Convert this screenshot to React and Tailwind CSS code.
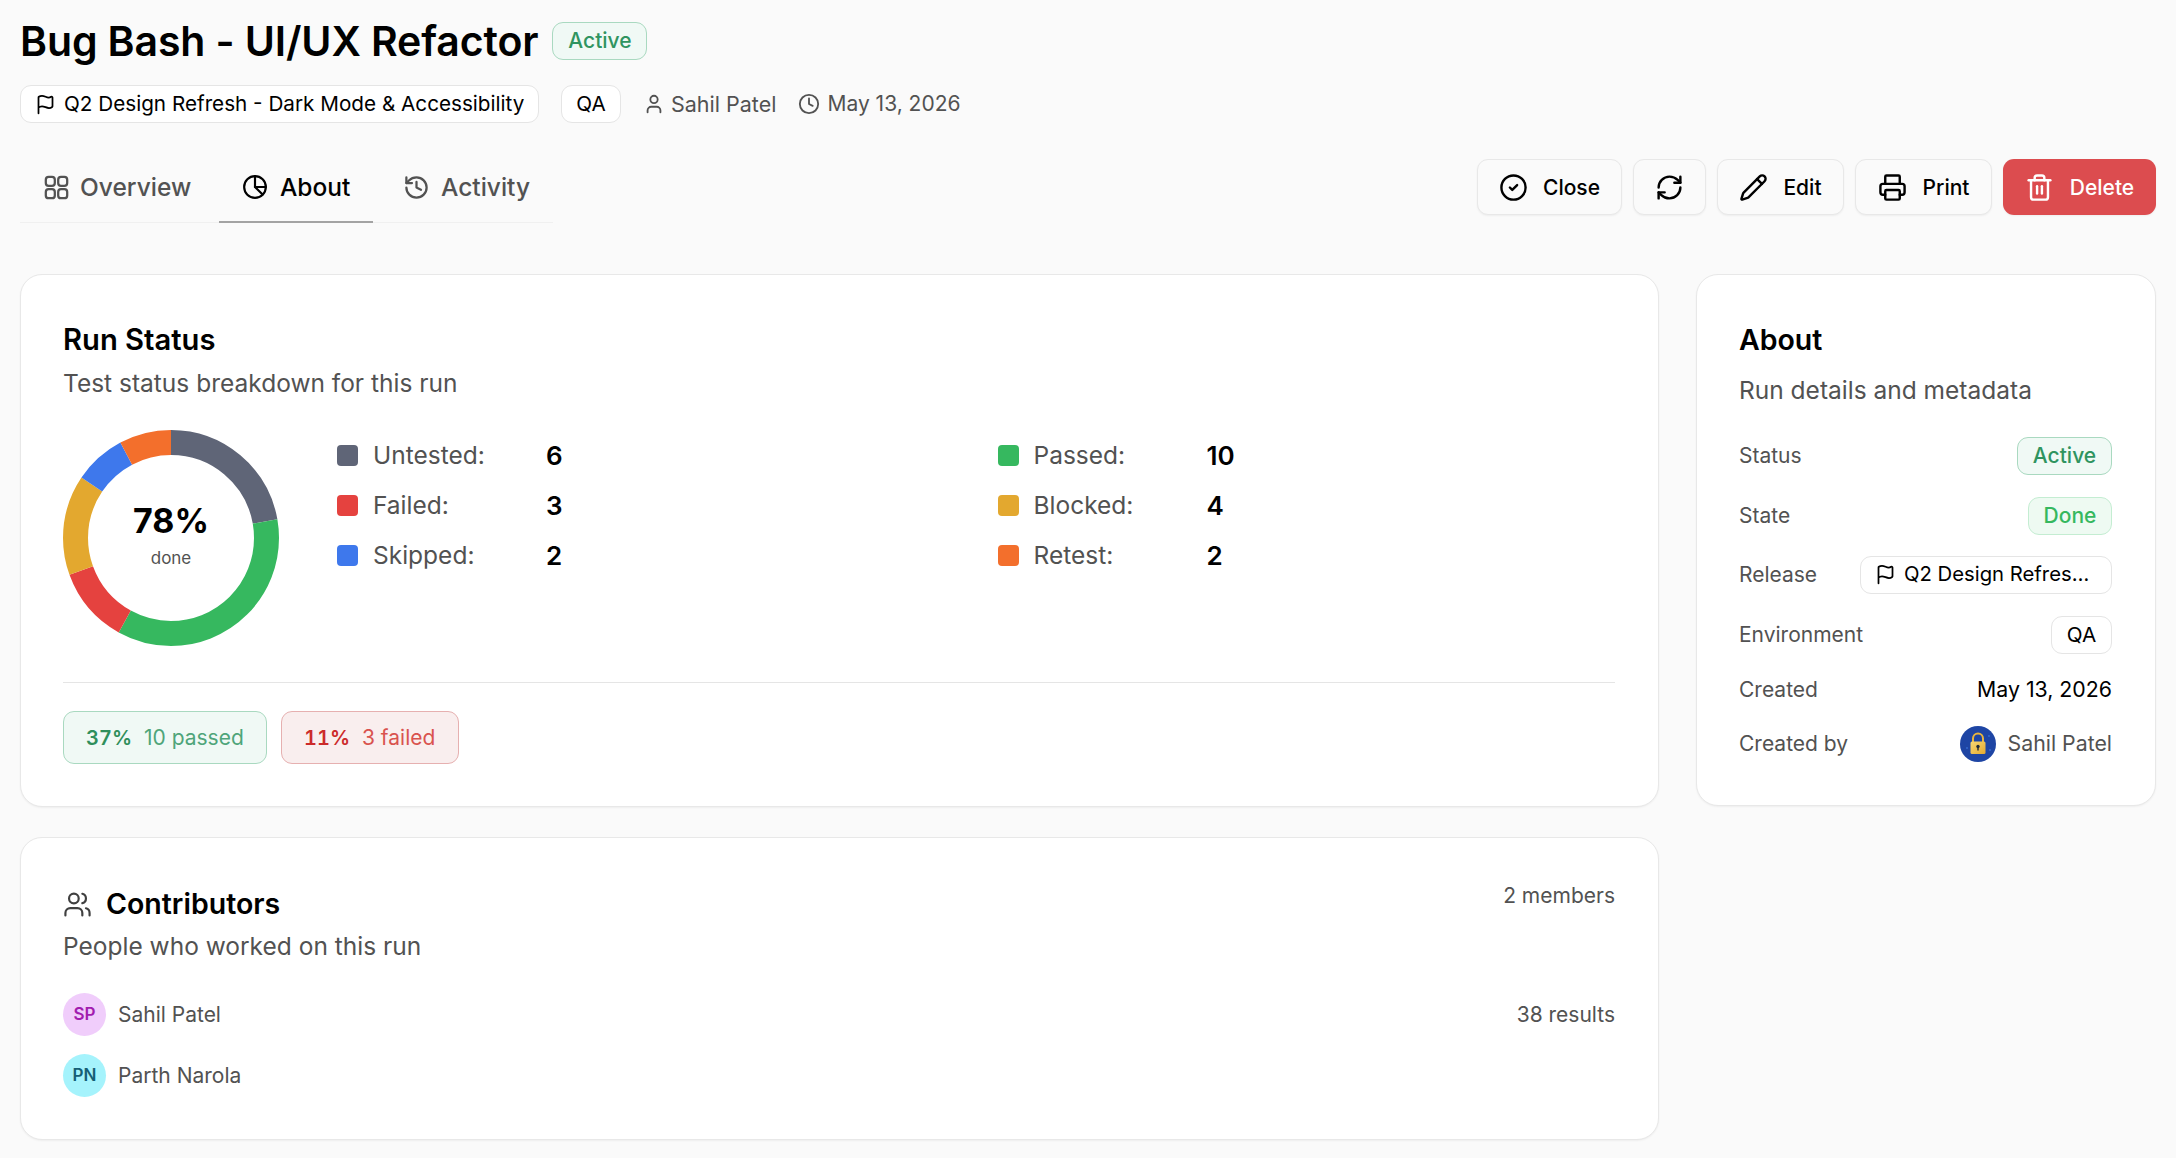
import React from "react";
import {
  CircleCheck,
  Clock,
  Flag,
  History,
  Pencil,
  Printer,
  RefreshCw,
  Trash2,
  User,
  Users,
} from "lucide-react";

const SEGMENTS = [
  { label: "Untested", value: 6, deg: 80, color: "#5f6577" },
  { label: "Passed", value: 10, deg: 129, color: "#36b85f" },
  { label: "Failed", value: 3, deg: 41, color: "#e5423f" },
  { label: "Blocked", value: 4, deg: 54, color: "#e3a82f" },
  { label: "Skipped", value: 2, deg: 28, color: "#3e78ec" },
  { label: "Retest", value: 2, deg: 28, color: "#f36f2c" },
];

const Donut = () => {
  let offset = 0;
  return (
    <div className="relative h-[216px] w-[216px] shrink-0">
      <svg viewBox="0 0 216 216" className="h-[216px] w-[216px] -rotate-90">
        {SEGMENTS.map((s) => {
          const el = (
            <circle
              key={s.label}
              cx="108"
              cy="108"
              r="95.5"
              fill="none"
              stroke={s.color}
              strokeWidth="25"
              pathLength="360"
              strokeDasharray={`${s.deg} ${360 - s.deg}`}
              strokeDashoffset={-offset}
            />
          );
          offset += s.deg;
          return el;
        })}
      </svg>
      <div className="absolute inset-0 flex flex-col items-center justify-center">
        <span className="text-[34px] leading-[44px] font-bold text-black mt-[-8px]">78%</span>
        <span className="text-[17px] leading-[24px] text-[#525252] mt-[3px]">done</span>
      </div>
    </div>
  );
};

const LegendItem = ({ label, value, color }) => (
  <div className="flex h-[50px] items-center">
    <span className="h-[21px] w-[21px] rounded-[4px]" style={{ backgroundColor: color }} />
    <span className="ml-[15px] w-[173px] text-[24.5px] text-[#525252]">{label}:</span>
    <span className="text-[26px] font-semibold text-black">{value}</span>
  </div>
);

const PieIcon = ({ className }) => (
  <svg viewBox="0 0 24 24" fill="none" stroke="currentColor" strokeWidth="2" strokeLinecap="round" strokeLinejoin="round" className={className}>
    <circle cx="12" cy="12" r="10" />
    <path d="M12 2v10h10" />
    <path d="M12 12l7 7" />
  </svg>
);

const GridIcon = ({ className }) => (
  <svg viewBox="0 0 24 24" fill="none" stroke="currentColor" strokeWidth="2" className={className}>
    <rect x="2.5" y="2.5" width="8" height="8" rx="2.5" />
    <rect x="13.5" y="2.5" width="8" height="8" rx="2.5" />
    <rect x="2.5" y="13.5" width="8" height="8" rx="2.5" />
    <rect x="13.5" y="13.5" width="8" height="8" rx="2.5" />
  </svg>
);

const LockAvatar = () => (
  <svg viewBox="0 0 36 36" className="h-[36px] w-[36px] shrink-0">
    <defs>
      <linearGradient id="lockBody" x1="0" y1="0" x2="1" y2="1">
        <stop offset="0" stopColor="#f7d774" />
        <stop offset="1" stopColor="#e5a92e" />
      </linearGradient>
    </defs>
    <circle cx="18" cy="18" r="18" fill="#1e45a4" />
    <circle cx="7" cy="22" r="1" fill="#3468cc" />
    <circle cx="29" cy="10" r="1" fill="#3468cc" />
    <circle cx="30" cy="24" r="1" fill="#3468cc" />
    <path d="M13 16v-3.5a5 5 0 0 1 10 0V16" fill="none" stroke="#e8b53e" strokeWidth="2" />
    <rect x="10.5" y="15.5" width="15" height="12.5" rx="1.5" fill="url(#lockBody)" />
    <circle cx="18" cy="20.5" r="1.7" fill="#1f2937" />
    <rect x="17.3" y="21" width="1.4" height="3.5" fill="#1f2937" />
  </svg>
);

const ActiveBadge = () => (
  <span className="flex h-[38px] w-[95px] items-center justify-center rounded-[11px] border border-[#a9d9c0] bg-[#f0f9f5] text-[21px] font-medium text-[#2f9460]">
    Active
  </span>
);

const Chip = ({ children, className }) => (
  <span className={`flex h-[38px] items-center whitespace-nowrap rounded-[11px] border border-[#e5e5e5] bg-white text-[20.7px] text-black ${className || ""}`}>
    {children}
  </span>
);

const Tab = ({ icon, label, active, className }) => (
  <div
    className={`-mb-px flex h-[64px] items-center border-b-2 pb-[6px] font-medium ${
      active ? "border-[#a3a3a3] text-black" : "border-transparent text-[#525252]"
    } ${className}`}
  >
    {icon}
    <span className="text-[24.5px]">{label}</span>
  </div>
);

const ActionButton = ({ children, className }) => (
  <button className={`flex h-[56px] items-center justify-center rounded-[11px] border border-[#e8e8e8] bg-[#fafafa] pt-[1px] text-[21px] font-medium text-black shadow-xs ${className}`}>
    {children}
  </button>
);

const DetailRow = ({ label, className, children }) => (
  <div className={`flex items-center justify-between ${className}`}>
    <span className="text-[21px] text-[#525252]">{label}</span>
    {children}
  </div>
);

const Contributor = ({ initials, name, bg, fg }) => (
  <div className="flex h-[43px] items-center gap-[12px]">
    <span className={`flex h-[43px] w-[43px] items-center justify-center rounded-full text-[17px] font-semibold ${bg} ${fg}`}>
      {initials}
    </span>
    <span className="text-[21px] text-[#525252]">{name}</span>
  </div>
);

export default function App() {
  const cardClass = "rounded-[22px] border border-[#e8e8e8] bg-white shadow-xs";
  return (
    <div className="min-h-screen bg-[#fafafa] px-[20px] pt-[22px] font-['Inter',sans-serif] w-[2176px] h-[1158px] overflow-hidden">
      <div className="flex h-[38px] items-center gap-[14px]">
        <h1 className="text-[41px] leading-[38px] font-semibold tracking-[-0.003em] text-black">Bug Bash - UI/UX Refactor</h1>
        <ActiveBadge />
      </div>

      <div className="mt-[25px] flex h-[38px] items-center text-[21.5px] text-[#525252]">
        <Chip className="w-[519px] gap-[8px] pl-[14px]">
          <Flag className="h-[21px] w-[21px]" strokeWidth={2} />
          Q2 Design Refresh - Dark Mode &amp; Accessibility
        </Chip>
        <Chip className="ml-[22px] w-[60px] justify-center">QA</Chip>
        <User className="ml-[22px] h-[22px] w-[22px]" strokeWidth={2} />
        <span className="ml-[6px]">Sahil Patel</span>
        <Clock className="ml-[22px] h-[22px] w-[22px]" strokeWidth={2} />
        <span className="ml-[7px] text-[21px]">May 13, 2026</span>
      </div>

      <div className="mt-[36px] flex items-start justify-between">
        <div className="flex w-[533px] border-b border-[#f0f0f0]">
          <Tab className="w-[199px] gap-[10px] pl-[23px]" icon={<GridIcon className="h-[27px] w-[27px]" />} label="Overview" />
          <Tab className="w-[154px] gap-[12px] pl-[23px]" active icon={<PieIcon className="h-[26px] w-[26px]" />} label="About" />
          <Tab className="ml-[30px] gap-[11px]" icon={<History className="h-[27px] w-[27px]" strokeWidth={2} />} label="Activity" />
        </div>
        <div className="flex gap-[11px]">
          <ActionButton className="w-[145px] gap-[15px]">
            <CircleCheck className="h-[29px] w-[29px]" strokeWidth={2} />
            Close
          </ActionButton>
          <ActionButton className="w-[73px]">
            <RefreshCw className="h-[29px] w-[29px]" strokeWidth={2} />
          </ActionButton>
          <ActionButton className="w-[127px] gap-[15px]">
            <Pencil className="h-[29px] w-[29px]" strokeWidth={2} />
            Edit
          </ActionButton>
          <ActionButton className="w-[137px] gap-[16px]">
            <Printer className="h-[29px] w-[29px]" strokeWidth={2} />
            Print
          </ActionButton>
          <button className="flex h-[56px] w-[153px] items-center justify-center gap-[16px] rounded-[11px] bg-[#dc4c4f] pt-[1px] text-[21px] font-medium text-white shadow-xs">
            <Trash2 className="h-[29px] w-[29px]" strokeWidth={2} />
            Delete
          </button>
        </div>
      </div>

      <div className="mt-[51px] grid grid-cols-[1639px_460px] gap-x-[37px]">
        <div className="flex flex-col gap-[30px]">
          <section className={`${cardClass} h-[533px] pl-[42px] pr-[43px] pt-[47px]`}>
            <h2 className="text-[29.2px] leading-[36px] font-semibold text-black">Run Status</h2>
            <p className="mt-[7px] text-[24.5px] leading-[36px] text-[#525252]">Test status breakdown for this run</p>
            <div className="mt-[29px] flex">
              <Donut />
              <div className="ml-[58px] grid flex-1 grid-cols-2 content-start gap-x-[43px]">
                {[0, 1, 2, 3, 4, 5].map((i) => (
                  <LegendItem key={i} {...SEGMENTS[i]} />
                ))}
              </div>
            </div>
            <div className="mt-[36px] border-t border-[#e5e5e5]" />
            <div className="mt-[28px] flex gap-[14px]">
              <span className="flex h-[53px] w-[204px] items-center gap-[12px] rounded-[11px] border border-[#a9d9c0] bg-[#f0f9f5] pl-[22px] text-[21px]">
                <span className="text-[20px] font-semibold tabular-nums text-[#2f8f5b]">37%</span>
                <span className="text-[#4fa57a]">10 passed</span>
              </span>
              <span className="flex h-[53px] w-[178px] items-center gap-[12px] rounded-[11px] border border-[#e6b0b0] bg-[#f9eeee] pl-[22px] text-[21px]">
                <span className="text-[20px] font-semibold tabular-nums text-[#cc2a2a]">11%</span>
                <span className="text-[#d9534f]">3 failed</span>
              </span>
            </div>
          </section>

          <section className={`${cardClass} h-[303px] pl-[42px] pr-[43px] pt-[47px]`}>
            <div className="flex items-start justify-between">
              <div className="flex h-[38px] items-center gap-[14px]">
                <Users className="h-[29px] w-[29px] text-[#404040]" strokeWidth={1.8} />
                <h2 className="text-[28.5px] font-semibold text-black">Contributors</h2>
              </div>
              <span className="mt-[-5px] text-[21px] text-[#525252]">2 members</span>
            </div>
            <p className="mt-[5px] text-[24.5px] leading-[36px] text-[#525252]">People who worked on this run</p>
            <div className="mt-[29px] flex flex-col gap-[18px]">
              <div className="flex items-center justify-between">
                <Contributor initials="SP" name="Sahil Patel" bg="bg-[#f0cdfb]" fg="text-[#a21caf]" />
                <span className="text-[21px] text-[#525252]">38 results</span>
              </div>
              <Contributor initials="PN" name="Parth Narola" bg="bg-[#a5f3fc]" fg="text-[#155e75]" />
            </div>
          </section>
        </div>

        <aside className={`${cardClass} h-[532px] pl-[42px] pr-[43px] pt-[47px] self-start`}>
          <h2 className="text-[28.5px] leading-[36px] font-semibold text-black">About</h2>
          <p className="mt-[14px] text-[24.5px] leading-[36px] text-[#525252]">Run details and metadata</p>
          <div className="mt-[29px] flex flex-col">
            <DetailRow label="Status" className="h-[37px]">
              <ActiveBadge />
            </DetailRow>
            <DetailRow label="State" className="mt-[23px] h-[37px]">
              <span className="flex h-[38px] w-[84px] items-center justify-center rounded-[11px] border border-[#c4edd2] bg-[#eefaf2] text-[21px] font-medium text-[#36b85f]">
                Done
              </span>
            </DetailRow>
            <DetailRow label="Release" className="mt-[22px] h-[37px]">
              <Chip className="w-[252px] gap-[8px] pl-[14px]">
                <Flag className="h-[21px] w-[21px] shrink-0" strokeWidth={2} />
                <span className="text-[20.3px]">Q2 Design Refres…</span>
              </Chip>
            </DetailRow>
            <DetailRow label="Environment" className="mt-[23px] h-[37px]">
              <Chip className="w-[61px] justify-center">QA</Chip>
            </DetailRow>
            <DetailRow label="Created" className="mt-[18px] h-[37px]">
              <span className="text-[21.3px] text-black">May 13, 2026</span>
            </DetailRow>
            <DetailRow label="Created by" className="mt-[17px] h-[37px]">
              <span className="flex items-center gap-[12px]">
                <LockAvatar />
                <span className="text-[21.3px] text-[#525252]">Sahil Patel</span>
              </span>
            </DetailRow>
          </div>
        </aside>
      </div>
    </div>
  );
}
